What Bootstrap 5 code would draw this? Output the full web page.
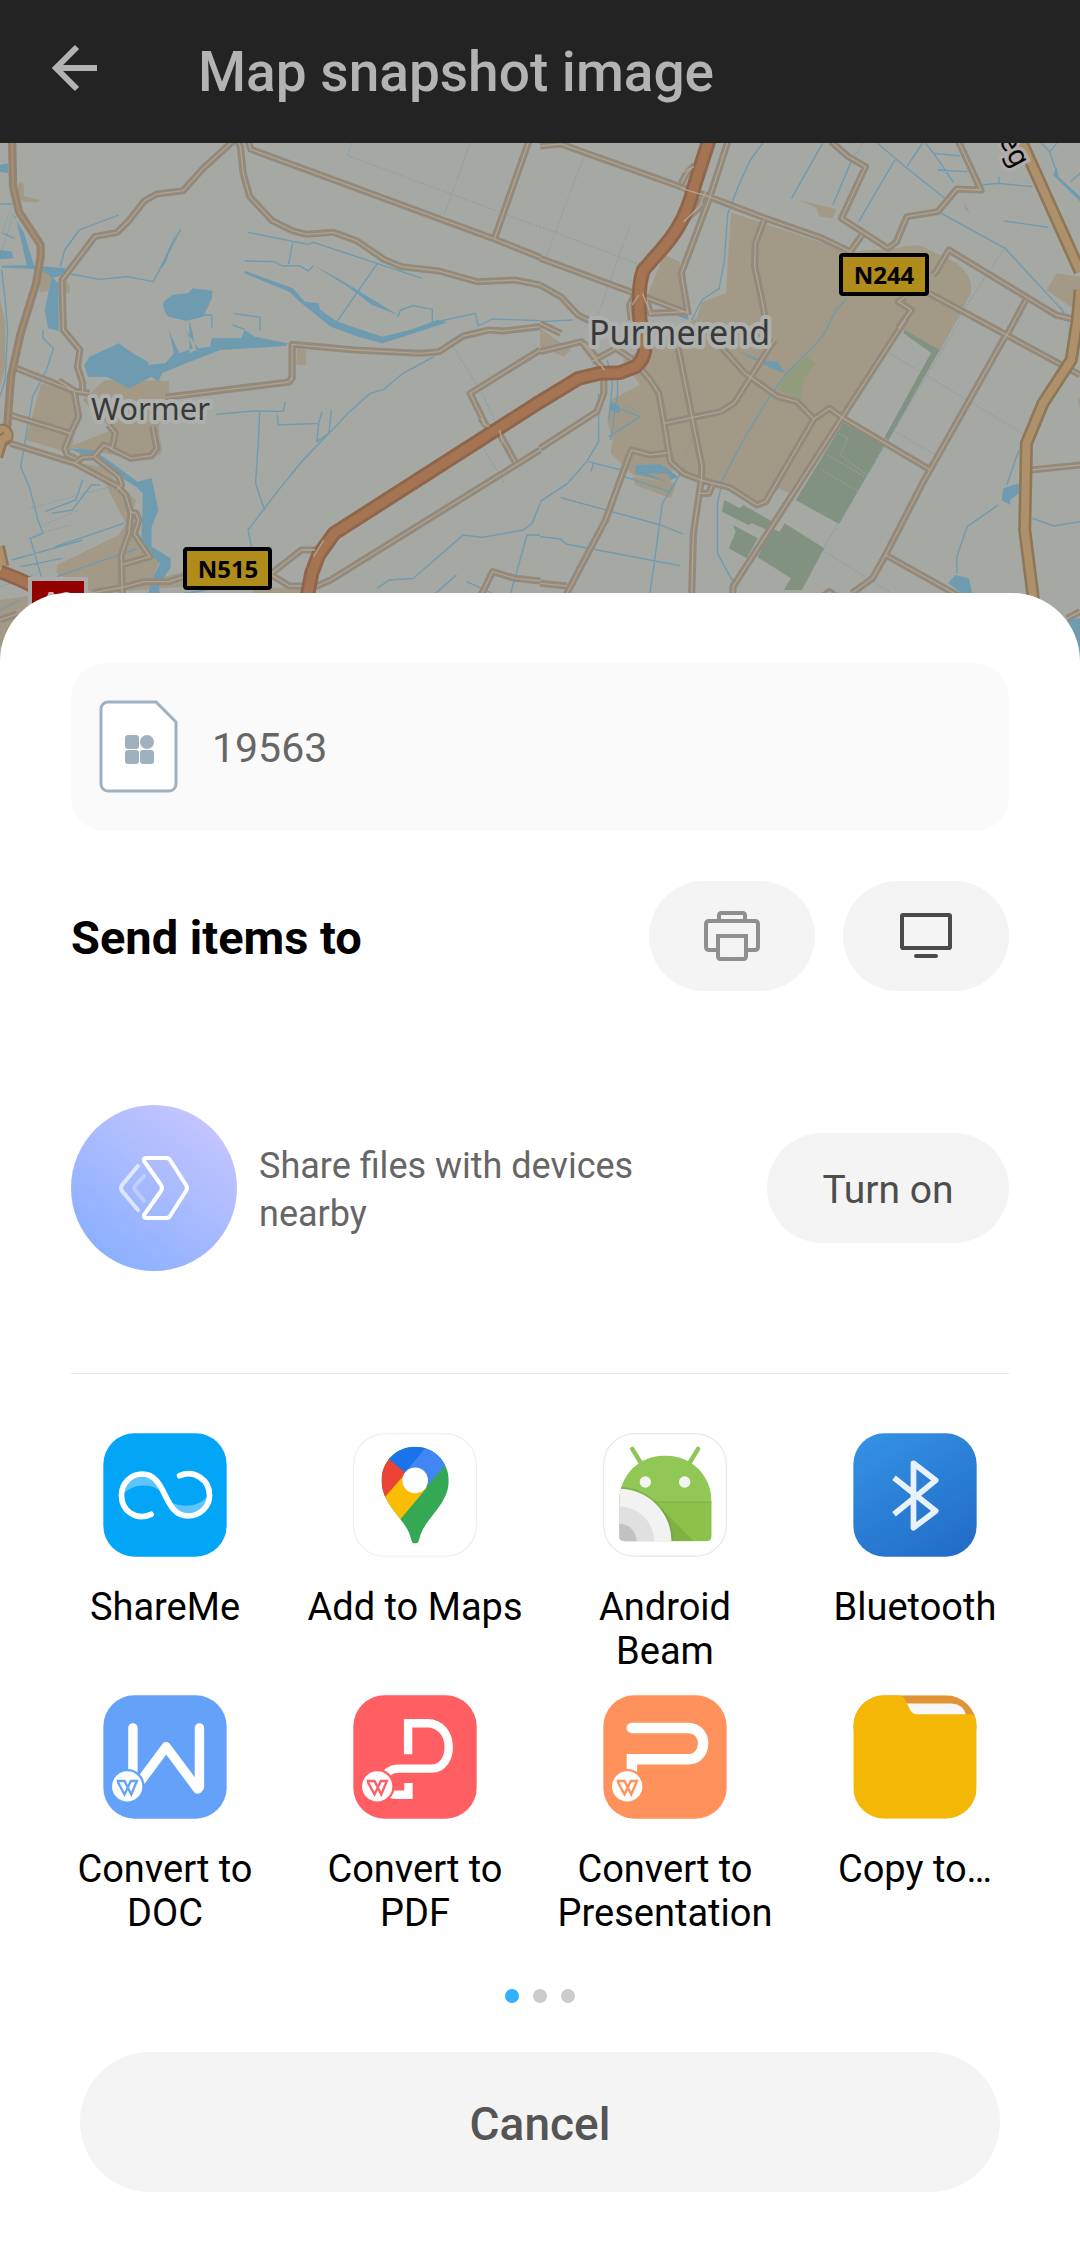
<!DOCTYPE html>
<html lang="en">
<head>
<meta charset="utf-8">
<meta name="viewport" content="width=device-width, initial-scale=1">
<title>Map snapshot image</title>
<link href="https://cdn.jsdelivr.net/npm/bootstrap@5.3.0/dist/css/bootstrap.min.css" rel="stylesheet">
<style>
body{font-family:Roboto,"Noto Sans",sans-serif;color:#000;background:#fff}
.topbar{height:143px;background:#232323;color:#b3b3b3;padding:0 50px}
.topbar h1{font-size:55px;line-height:64px;margin:0 0 0 98px;font-weight:500}
.back-btn{color:inherit;width:50px;height:50px;margin-bottom:8px}
.map-art{width:100%;height:auto}
.sheet{background:#fff;border-radius:68px 68px 0 0;margin-top:-87px;padding:70px 40px}
.inset{margin-left:31px;margin-right:31px}
.file-card{background:#fafafa;border-radius:34px;height:168px;padding:0 28px;gap:34px;font-size:41px;color:#666}
.file-card svg{margin-bottom:2px}
.file-card span,.send-row h2,.near-row p{padding-top:4px}
.send-row{margin-top:50px;gap:28px}
.send-row h2{font-size:47px;line-height:56px;font-weight:700;margin:0}
.pill{background:#f4f4f4;border:0;border-radius:70px;height:110px;width:166px;padding:0}
.pill.wide{width:242px;font-size:39px;color:#4d4d4d;padding-top:4px}
.near-row{margin-top:114px;gap:22px}
.near-row p{font-size:36px;line-height:48px;color:#666;margin:0}
.divider{height:1px;background:#e6e6e6;margin-top:102px;margin-bottom:59px}
.app{height:262px;color:#000;font-size:38px;line-height:44px;text-decoration:none;text-align:center;gap:28px}
.app svg{width:124px;height:124px}
.dots{gap:14px;margin-top:32px;margin-bottom:49px}
.dots button{width:14px;height:14px;border:0;border-radius:50%;padding:0;background:#ccc}
.dots button.active{background:#32b0ff}
.cancel{width:auto;height:140px;margin:0 40px;font-size:46px;font-weight:500;color:#555;padding-top:4px}
.town{font-family:"Noto Sans",sans-serif;fill:#383938;stroke:#aeb0ae;stroke-width:8px;paint-order:stroke;stroke-linejoin:round}
.shield{font:700 24px "Noto Sans",sans-serif;text-anchor:middle}
</style>
</head>
<body>
<header class="topbar navbar flex-nowrap justify-content-start align-items-center">
  <button class="back-btn btn p-0 border-0 d-flex" type="button" aria-label="Back">
    <svg width="50" height="50" viewBox="0 0 50 50" fill="none" stroke="currentColor" stroke-width="6"><path d="M47 25H7M27 4L6 25l21 21"/></svg>
  </button>
  <h1>Map snapshot image</h1>
</header>

<main>
<svg class="map-art d-block" viewBox="0 143 1080 537" role="img" aria-label="Map of Purmerend and Wormer">
  <defs>
    <g id="minor">
      <path d="M680 420L590 505 532 572 455 582 420 602 370 667 340 697 275 710 180 840 184 990 232 1050 225 1100 240 1150V1175M690 420L698 440 706 520 725 590 790 662 848 692 890 703 968 697 1035 722 1115 778 1165 800 1275 813 1385 845 1495 840 1568 855M720 420L728 448 1435 717 1568 772M1435 717L1535 425M848 1140L848 1033 1030 1050 1220 1060 1275 1055 1345 1008 1420 990 1460 993 1568 980M480 1192L840 1146 848 1130"/>
      <path d="M48 1105L215 1173 260 1180M172 1145L175 1145 215 1172 228 1250 205 1300 188 1345 195 1365 220 1376M30 1245L205 1300M30 1330L218 1390 340 1458 365 1485 380 1540 374 1600 352 1665 355 1790M215 1390L240 1372 272 1370 302 1335 325 1345 335 1300 315 1275M320 1345L380 1375 440 1367 455 1345 443 1280M275 1372L345 1430 353 1455 340 1470M380 1535L395 1540 403 1560 390 1602 435 1670 355 1694M270 1778L355 1762 420 1745 490 1745 535 1730M785 1723L875 1650 920 1650M785 1723L840 1758 920 1758 960 1740 1568 1350M1568 1050L1365 1180 1410 1275M1415 1280L1395 1255M1450 1300L1495 1385M1390 1800L1430 1715 1495 1735 1568 1743M0 1860L50 1842"/>
      <g transform="translate(1568 0)">
        <path d="M0 438L60 432 420 565 490 590 655 655 820 715 900 755M545 425L490 600 410 820 430 945M410 550L425 520 450 495M415 665L460 625 480 575M650 660L625 730 623 800 640 880 655 960M0 775L275 880 430 940M0 855L60 890 110 945 170 975M0 970L60 1000M265 960L260 915 275 885M305 885L320 940 430 935M845 425L895 470 945 500 875 655 1010 745 1035 725 1065 650 1155 635 1210 567 1280 570 1215 425M900 755L935 705M1140 825L1150 815 1187 750 1498 945 1560 960M1410 900L1350 1015M1130 880L1568 1125M1060 890L1040 905 1078 930 1040 985M1350 1010L1110 1450 1003 1665 965 1735 905 1780M1040 985L1060 960 875 1255 560 1760V1785M1003 1665L1220 1790"/>
        <path d="M0 1055L120 1025 170 1090 185 1110V1180L165 1235 0 1345M400 1040L435 1220 470 1400 468 1440 445 1600 440 1790M525 1040L595 1120 690 1190 745 1205 795 1257 840 1225 880 1255 1130 1408M795 1257L655 1505 630 1515 550 1462 465 1440 415 1420 378 1385 360 1270 345 1180 320 1140 295 1110M360 1270L525 1235 565 1208 600 1150 680 1020M370 1358L320 1365 265 1350 245 1405 190 1560 75 1785M0 1750L78 1758M463 1480L490 1480 500 1455M130 1030L165 1075M150 1085L220 1045 300 1100M1425 1410L1568 1395M820 1790L840 1775 860 1790M1530 1855L1568 1835"/>
      </g>
    </g>
    <g id="motor">
      <path d="M2060 415L2015 560C1990 670 1940 725 1915 755L1868 810Q1850 860 1858 960L1872 1050Q1868 1080 1845 1100L1800 1118 1740 1120 1680 1135 1568 1205 970 1600 925 1665 905 1720 890 1800M0 1715L60 1740 110 1765"/>
    </g>
    <g id="primary">
      <path d="M2968 430L3136 815M3136 870L3128 960 3110 1080 3028 1210 2980 1330 2975 1590 3003 1820M-10 1370L5 1320 20 1310M-5 1640L8 1700"/>
    </g>
  </defs>
  <rect y="143" width="1080" height="537" fill="#a6a8a4"/>
  <g transform="scale(.34444 .33333)" fill="none" stroke-linejoin="round">
    <g fill="#a29a86">
      <path d="M58 545L68 550 70 588 115 600 112 607 65 605 45 575zM115 815L150 820 148 870 115 878zM188 830L203 860 200 880 188 878zM0 900L15 960 15 1100 0 1160zM120 1150L215 1175 228 1250 205 1360 75 1320 110 1185zM305 1140L490 1142 492 1190 498 1200 460 1280 470 1350 465 1365 380 1375 200 1340 325 1290 240 1200zM225 1390L300 1400 360 1470 395 1500 375 1570 420 1630 465 1680 440 1740 535 1715 535 1760 270 1780 165 1720 165 1695 345 1605 365 1570 305 1450zM863 1045L888 1050 888 1095 860 1095zM620 1770L880 1760 880 1785 740 1785 730 1765zM0 1800L140 1780 0 1940z"/>
      <g transform="translate(1568 0)"><path d="M555 638L900 755 1035 745Q1090 725 1130 750L1210 790Q1260 830 1250 880L1210 960 1160 1055 1050 990 720 1480 695 1465 650 1510 540 1460 380 1410 380 1450 270 1425 205 1360 210 1320 195 1260 205 1200 290 1155 240 1080 455 955 470 905 540 880 545 780zM360 765L405 785 430 940 310 890zM750 600L860 628 850 655 812 650 800 622zM1225 585L1230 610 1248 638 1235 630zM1500 820L1568 830 1568 940 1470 870zM0 985L90 1050 70 1070 0 1040zM1560 1195L1568 1195V1230zM270 1430L395 1450 380 1495 275 1455z"/></g>
    </g>
    <g transform="translate(1568 960)"><path fill="#929c7d" d="M775 110L800 130 768 175 755 240 690 210 715 160z"/>
      <path fill="#819280" d="M1058 30L1160 90 1010 362 1000 352 1135 98 1055 40zM880 308L1000 375 868 612 742 540zM535 540L580 565 590 555 675 605 660 630 615 610 605 615 528 575zM560 615L632 655 600 715 548 685 568 635zM710 610L825 685 760 810H708L728 775 632 712 670 625 695 635z"/>
      <path stroke="#a6a8a4" stroke-width="3" stroke-dasharray="3 5" d="M868 340L893 355 872 405 950 465M835 405L945 472M815 448L925 515"/></g>
    <g fill="#6e9bb0">
      <path d="M500 885L545 880 560 865 617 872 615 895 590 950 550 960 550 1060 570 1050 550 960 538 962 490 950Q470 930 475 905zM0 495L22 490 25 520 0 515zM0 750L35 755 38 775 0 778zM5 797L85 795 190 805 185 825 150 835 140 822 100 807 5 803zM35 640L70 700 100 800 78 795 45 650zM150 830L170 850V990L215 1010 240 1075 200 1000 140 985 130 930zM260 1070L345 1030 365 1045 385 1060 430 1085 430 1095 480 1090 505 1060 490 990 520 1060 560 1045 540 990 575 1045 610 1040 615 1015 700 1015 710 990 740 1010 835 1030 830 1038 640 1050 540 1090 470 1120 460 1145 440 1130 375 1165 310 1130 255 1130 245 1095zM710 812L850 865 885 905 925 910 930 930 980 965 1110 1010 1190 990 1270 960 1300 967 1170 1010 1110 1030 1040 1010 960 980 900 930 870 905 840 875 710 820zM300 1370L400 1445 440 1435 460 1530 440 1580V1640L495 1675 495 1705 460 1755 465 1785H430L440 1740 465 1690 410 1640 415 1480 395 1460 270 1380 200 1345 270 1350zM910 795L990 840 1155 945 1080 915 1010 860zM460 815L515 690 480 790zM670 1755L540 1785H490z"/>
      <g transform="translate(1568 0)"><path d="M380 940L430 935 430 960zM1345 1465L1390 1450 1390 1480 1365 1500 1365 1515 1340 1500zM1185 1750L1205 1725 1245 1735 1255 1785H1230zM1500 500L1505 530 1568 590V605L1490 525zM1145 485L1185 530 1165 510zM1568 1855V1980L1530 1860zM570 1050L640 1080 690 1085 710 1120 640 1090zM205 1205L232 1220V1240L200 1230zM280 1395L350 1393 375 1410 400 1430 380 1440 370 1420 310 1420 370 1445 275 1420z"/></g>
    </g>
    <g stroke="#6e9bb0" stroke-width="4">
      <path d="M205 822L290 838 370 830 445 845 525 687M175 800L188 750 230 690 345 645M720 697L895 733 910 727 1225 835M710 783L795 785 820 798 870 797 895 813 910 797M850 725L838 792M1095 792L1035 880 975 970M1155 950L1163 930 1200 917 1255 928V965M1260 967L1380 940 1388 978 1430 957 1568 962M678 940L755 952V990M675 975L710 988M590 945H615V985M0 612H35M10 700L42 715M5 810L15 900 22 990 15 1140 0 1190"/>
      <path d="M628 1243L735 1233 822 1234 828 1205M754 1235L750 1325 742 1450 768 1530M805 1245L808 1275 925 1270 935 1235M925 1270L920 1325 955 1300 1010 1240 1075 1180 1115 1168 1170 1120 1260 1070M955 1300L880 1380 805 1475 720 1590 730 1640M125 990V1015L155 1045 135 1110 95 1190 60 1400 85 1460 110 1560 125 1600 88 1615 120 1730M240 1440L220 1500 130 1535M290 1455H265L210 1530 150 1540M160 1640L360 1570M35 1680L240 1620M60 1700L180 1675M165 1730L400 1645M0 1830L60 1800M1095 1765L1130 1740 1200 1735 1345 1605 1400 1612 1520 1590 1545 1570 1568 1510M1480 1790L1530 1605H1568M1265 1780L1325 1725M1355 1745L1440 1785M962 1230L955 1300"/>
      <g transform="translate(1568 0)"><path d="M650 425L610 480 575 560 545 640 535 780 520 865 470 900 440 960M820 430L730 595M980 430L1060 500 1175 595M1030 480L925 665M905 480L850 615M1120 430L1160 485 1200 548M1065 500L1110 430M1145 460L1220 468M1155 510L1240 515M1165 640L1350 745 1520 935M1280 555L1330 550 1430 560M1332 530V550M1348 663L1475 682M1455 430L1480 455 1500 520M1500 430L1480 455M1540 545L1568 520M890 895L860 930 820 1010 750 1085 715 1120 660 1200 590 1320 530 1440 515 1510V1660L560 1745M0 965L95 960M195 1080L210 1150 200 1260M225 1140V1180L205 1320M200 1310L290 1250 205 1215M170 1180V1325L135 1385 80 1450 0 1505M140 1385L235 1410M155 1390L148 1415M60 1493L350 1575 415 1602M0 1610L60 1617 75 1632 405 1697M245 1430L375 1475M420 1400L355 1510 330 1700 318 1785M1390 1350L1355 1455M1330 1515L1240 1580 1210 1670V1720M1430 1555L1490 1578 1568 1565M1510 920L1530 960"/></g>
    </g>
    <g stroke="#6e9bb0" stroke-width="3" stroke-dasharray="3 5">
      <path d="M1020 430L1010 467 1448 635 1568 682M1365 430L1288 648M0 770L40 640M5 700L32 622M85 1525L320 1460M125 1575L230 1530M100 1605L205 1575M1315 1040L1400 1180 1450 1290M1400 1340L1465 1450M0 1760L110 1720"/>
      <g transform="translate(1568 0)"><path d="M130 460L20 765M0 680L285 792M260 680L170 940M1345 750L1210 960M1220 960L820 1650 1020 1780M1015 1060L1400 1300M1030 1295L1150 1365M245 1215L290 1235M440 1320L415 1380M905 430L940 425 905 480M1530 960L1540 1000"/></g>
    </g>
    <use href="#minor" stroke="#928a7c" stroke-width="21"/>
    <use href="#minor" stroke="#b0a48f" stroke-width="4"/>
    <path stroke="#928372" stroke-width="24" d="M35 420L38 560 55 635 118 735 118 770 105 850 60 1000 32 1130 20 1290"/>
    <path stroke="#a8906f" stroke-width="6" d="M35 420L38 560 55 635 118 735 118 770 105 850 60 1000 32 1130 20 1290"/>
    <circle cx="5" cy="1306" r="32" fill="#ae906b" stroke="#8c7757" stroke-width="5"/>
    <use href="#primary" stroke="#8c7757" stroke-width="38"/>
    <use href="#primary" stroke="#ae906b" stroke-width="23"/>
    <use href="#motor" stroke="#8f664c" stroke-width="44"/>
    <use href="#motor" stroke="#a57452" stroke-width="27"/>
    <path stroke="#b0a48f" stroke-width="4" d="M1978 565L2058 590M1975 520L2015 500M1985 665L2040 610M1835 915L1855 885M1865 880L1890 945M1740 1090L1755 1110M1400 1270L1420 1280M1450 1290L1460 1330M910 1670L940 1620M885 1650H915"/>
  </g>
  <text class="town" x="91" y="420" font-size="31">Wormer</text>
  <text class="town" x="589" y="345" font-size="34">Purmerend</text>
  <g stroke="#000" stroke-width="4" fill="#b08c1b"><rect x="841" y="255" width="86" height="39" rx="2"/><rect x="185" y="549" width="85" height="39" rx="2"/></g>
  <rect x="30" y="579" width="56" height="50" fill="#920000" stroke="#aaa" stroke-width="4"/>
  <text class="shield" x="884" y="284">N244</text>
  <text class="shield" x="228" y="578">N515</text>
  <text class="shield" x="58" y="609" fill="#bbb">A8</text>
  <text transform="translate(1014 169) rotate(62)" text-anchor="end" font-family="Noto Sans,sans-serif" font-size="28" stroke="#b1acab" stroke-width="7" paint-order="stroke">eg</text>
</svg>

<section class="sheet position-relative" aria-label="Share">
  <div class="file-card inset d-flex align-items-center">
    <svg width="79" height="93" viewBox="0 0 79 93"><path d="M8 2H57L77 22V84a7 7 0 0 1-7 7H9a7 7 0 0 1-7-7V9A7 7 0 0 1 9 2z" fill="#fff" stroke="#9fb1be" stroke-width="3"/><g fill="#9fb1be"><rect x="26" y="35" width="14" height="14" rx="3"/><circle cx="48" cy="42" r="7"/><rect x="26" y="50" width="14" height="14" rx="3"/><rect x="41" y="50" width="14" height="14" rx="3"/></g></svg>
    <span>19563</span>
  </div>

  <div class="send-row inset d-flex align-items-center">
    <h2 class="me-auto">Send items to</h2>
    <button class="pill d-flex align-items-center justify-content-center" type="button" aria-label="Print">
      <svg width="56" height="50" viewBox="252 153 168 150" fill="none" stroke="#8f8f8f" stroke-width="12"><path d="M297 183V167q0-8 8-8h62q8 0 8 8v16M288 270H268q-10 0-10-10V193q0-10 10-10H404q10 0 10 10v67q0 10-10 10H384M294 228h84v61q0 8-8 8H302q-8 0-8-8z"/></svg>
    </button>
    <button class="pill d-flex align-items-center justify-content-center" type="button" aria-label="Cast to screen">
      <svg width="54" height="50" viewBox="838 153 160 150" fill="none" stroke="#4a4a4a" stroke-width="12"><rect x="846" y="165" width="144" height="99" rx="4"/><path stroke-linecap="round" d="M888 288h60"/></svg>
    </button>
  </div>

  <div class="near-row inset d-flex align-items-center">
    <svg class="flex-shrink-0" width="166" height="166" viewBox="0 0 166 166" fill="none" stroke="#fff" stroke-width="4" stroke-linejoin="round" stroke-linecap="round">
      <defs><linearGradient id="nearFill" x1=".2" y1=".9" x2=".8" y2=".1"><stop offset="0" stop-color="#8cb0ff"/><stop offset="1" stop-color="#c2c4ff"/></linearGradient></defs>
      <circle cx="83" cy="83" r="83" fill="url(#nearFill)" stroke="none"/>
      <path d="M75 53H95q3 0 4 2L115 80q2 3 0 6L99 111q-1 2-4 2H75q-3 0-2-3L90 86q2-3 0-6L73 56q-1-3 2-3z"/>
      <path opacity=".65" d="M67 61L51 80q-2 3 0 6l16 19"/><path opacity=".3" d="M73 71L64 81q-1 2 0 4l9 11"/>
    </svg>
    <p class="flex-grow-1">Share files with devices<br>nearby</p>
    <button class="pill wide flex-shrink-0" type="button">Turn on</button>
  </div>

  <div class="divider inset"></div>

  <nav class="row g-0 row-cols-4" aria-label="Apps">
    <a class="app col d-flex flex-column align-items-center" href="#">
      <svg viewBox="70 70 369 369"><rect x="71" y="71" width="367" height="367" rx="92" fill="#03a5f6"/><path fill="#5fc5f9" d="M128 255C134 210 160 192 187 192c38 0 52 30 64 60C225 220 160 215 128 255zM257 265C280 290 350 300 384 255c-4 44-36 62-61 62-40 0-54-26-66-52z"/><path fill="none" stroke="#fff" stroke-width="17" stroke-linecap="round" d="M213 312C168 332 125 302 125 255c0-35 27-63 62-63 75 0 60 125 136 125 35 0 64-27 64-62 0-47-46-76-89-58"/></svg>
      <span>ShareMe</span></a>
    <a class="app col d-flex flex-column align-items-center" href="#">
      <svg viewBox="820 70 369 369"><defs><clipPath id="pinShape"><path d="M1005 111c57 0 100 45 100 101 0 65-60 105-81 153-8 17-6 34-19 34s-11-17-19-34c-22-48-81-88-81-153 0-56 43-101 100-101z"/></clipPath></defs><rect x="822" y="72" width="365" height="365" rx="92" fill="#fff" stroke="#ebebeb" stroke-width="3"/><g clip-path="url(#pinShape)"><path fill="#34a853" d="M890 100h230v310H890z"/><path fill="#fbbc04" d="M850 330L975 186 1040 232 940 352z"/><path fill="#ea4335" d="M880 100L978 188 900 278z"/><path fill="#1a73e8" d="M900 125L978 190 1040 110V90H900z"/><path fill="#4285f4" d="M1043 105L976 187 1035 234 1120 136V90z"/></g><circle cx="1005" cy="211" r="38" fill="#fff"/></svg>
      <span>Add to Maps</span></a>
    <a class="app col d-flex flex-column align-items-center" href="#">
      <svg viewBox="130 70 369 369"><defs><clipPath id="robotBody"><path d="M178 275C178 195 238 137 315 137s138 58 138 138V376q0 16-16 16H194q-16 0-16-16z"/></clipPath></defs><rect x="132" y="72" width="365" height="365" rx="92" fill="#fff" stroke="#e4e4e4" stroke-width="3"/><path stroke="#8fc653" stroke-width="13" stroke-linecap="round" d="M217 117L245 163M413 117L385 163"/><g clip-path="url(#robotBody)"><path fill="#90c755" d="M170 130h290v270H170z"/><path fill="#8bc34a" d="M170 277h290v130H170z"/><path stroke="#7eb547" stroke-width="4" d="M270 276h190"/><path fill="#79ad40" d="M300 290L400 392H320z" opacity=".7"/><circle cx="178" cy="392" r="161" fill="#70983f" opacity=".5"/><circle cx="178" cy="392" r="156" fill="#f2f2f2"/><circle cx="178" cy="392" r="104" fill="#e0e0e0"/><circle cx="178" cy="392" r="52" fill="#c2c2c2"/></g><g fill="#f4f4f4"><circle cx="256" cy="216" r="17"/><circle cx="373" cy="216" r="17"/></g></svg>
      <span>Android<br>Beam</span></a>
    <a class="app col d-flex flex-column align-items-center" href="#">
      <svg viewBox="881 70 369 369"><defs><linearGradient id="btFill" x1=".2" y1="0" x2=".8" y2="1"><stop stop-color="#3390e2"/><stop offset="1" stop-color="#226dc8"/></linearGradient></defs><rect x="882" y="71" width="367" height="367" rx="92" fill="url(#btFill)"/><path fill="none" stroke="#e8f1fc" stroke-width="17" stroke-linejoin="round" d="M1003 203L1127 302 1061 352V160L1127 211 1003 312"/></svg>
      <span>Bluetooth</span></a>
    <a class="app col d-flex flex-column align-items-center" href="#">
      <svg viewBox="101 76 369 369" fill="none"><rect x="102" y="77" width="367" height="367" rx="92" fill="#64a2f9"/><path stroke="#fff" stroke-width="28" stroke-linecap="round" stroke-linejoin="round" d="M190 174V345M200 350L289 230 383 356 388 350V174"/><circle cx="173" cy="348" r="52" fill="#64a2f9"/><circle cx="173" cy="348" r="45" fill="#fff"/><path stroke="#64a2f9" stroke-width="7" d="M142 332h23l20 40 17-40h-18l-19 40-20-37"/></svg>
      <span>Convert to<br>DOC</span></a>
    <a class="app col d-flex flex-column align-items-center" href="#">
      <svg viewBox="851 76 369 369" fill="none"><rect x="852" y="77" width="367" height="367" rx="92" fill="#ff5e63"/><path stroke="#fff" stroke-width="25" d="M1015 252V160H1072C1155 160 1155 295 1084 295H990Q945 295 945 335T985 373H1016V338"/><circle cx="923" cy="348" r="52" fill="#ff5e63"/><circle cx="923" cy="348" r="45" fill="#fff"/><path stroke="#ff5e63" stroke-width="7" d="M892 332h23l20 40 17-40h-18l-19 40-20-37"/></svg>
      <span>Convert to<br>PDF</span></a>
    <a class="app col d-flex flex-column align-items-center" href="#">
      <svg viewBox="191 76 369 369" fill="none"><rect x="192" y="77" width="367" height="367" rx="92" fill="#ff925c"/><path stroke="#fff" stroke-width="31" d="M276 174H444C504 174 504 267 444 267H277V330"/><circle cx="276" cy="174" r="15" fill="#fff"/><circle cx="263" cy="348" r="52" fill="#ff925c"/><circle cx="263" cy="348" r="45" fill="#fff"/><path stroke="#ff925c" stroke-width="7" d="M232 332h23l20 40 17-40h-18l-19 40-20-37"/></svg>
      <span>Convert to<br>Presentation</span></a>
    <a class="app col d-flex flex-column align-items-center" href="#">
      <svg viewBox="941 76 369 369"><defs><clipPath id="folderShape"><rect x="942" y="77" width="367" height="367" rx="92"/></clipPath></defs><g clip-path="url(#folderShape)"><path fill="#e29434" d="M942 77h367v100H942z"/><path fill="#f7f7f7" d="M1090 101H1235q35 2 43 35H1110z"/><path fill="#f5b705" d="M942 77H1075q14 0 20 12L1112 122q6 11 20 11H1290q12 0 19 10V444H942z"/></g></svg>
      <span>Copy to…</span></a>
  </nav>

  <div class="dots d-flex justify-content-center">
    <button class="active" type="button" aria-label="Page 1"></button>
    <button type="button" aria-label="Page 2"></button>
    <button type="button" aria-label="Page 3"></button>
  </div>
  <div class="d-grid"><button class="pill cancel" type="button">Cancel</button></div>
</section>
</main>
<script src="https://cdn.jsdelivr.net/npm/bootstrap@5.3.0/dist/js/bootstrap.bundle.min.js"></script>
</body>
</html>
